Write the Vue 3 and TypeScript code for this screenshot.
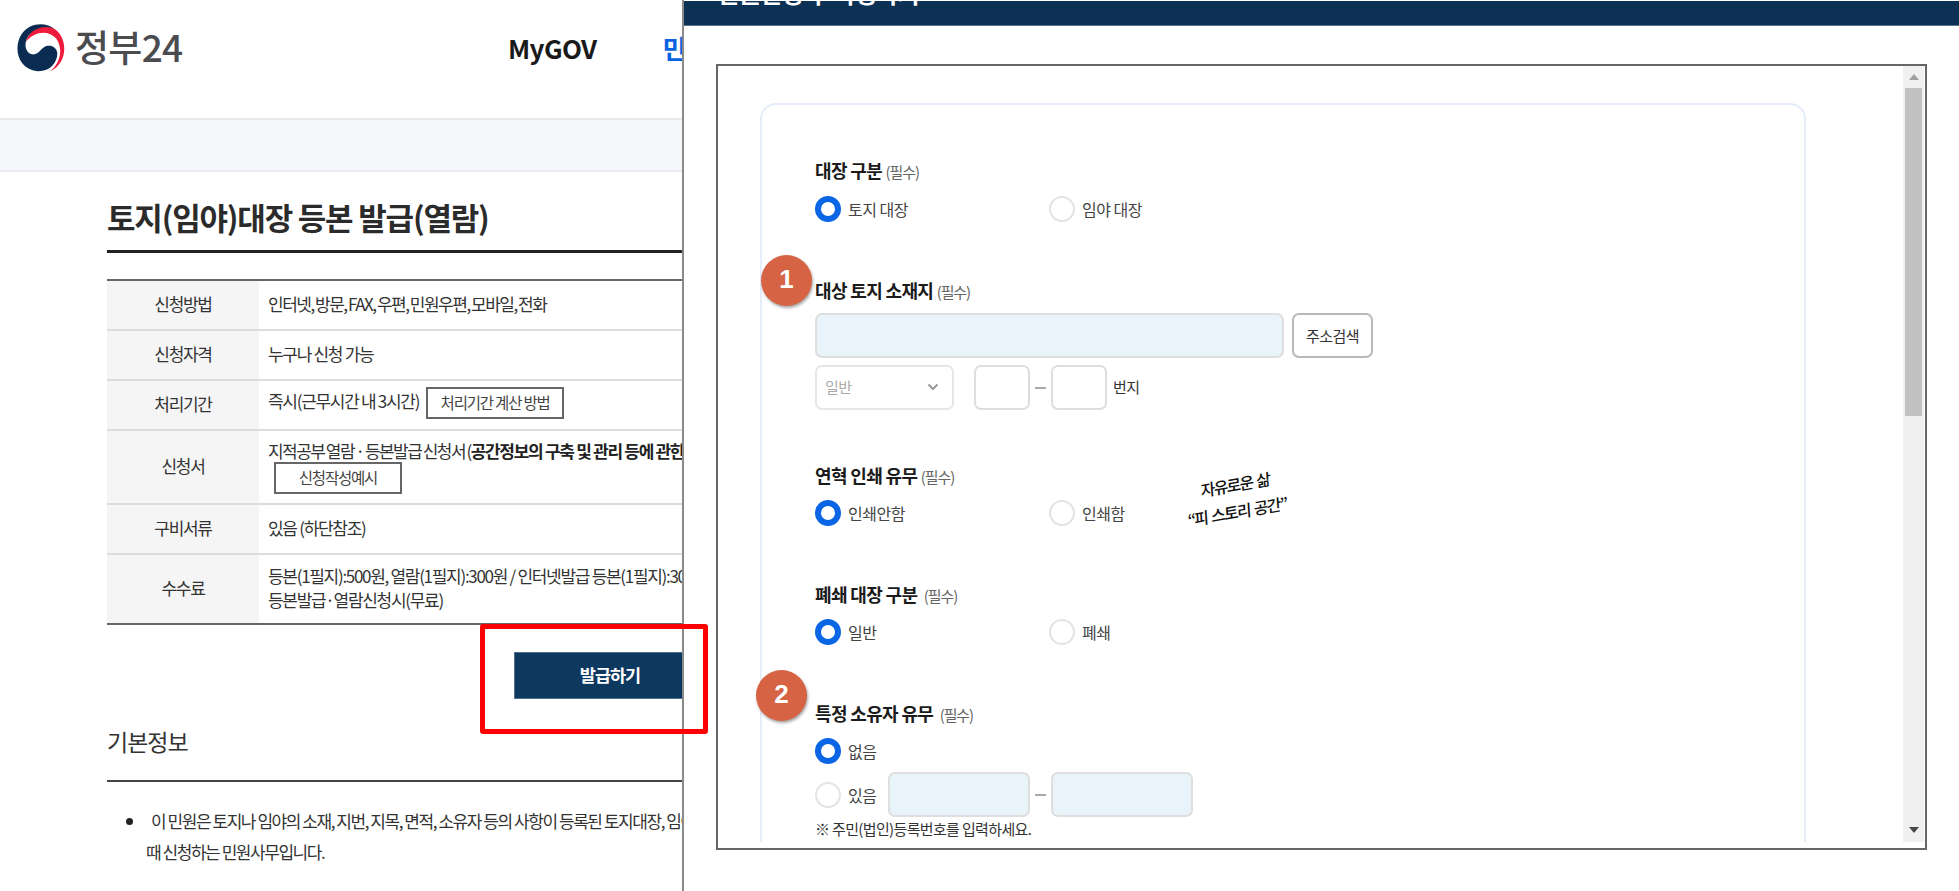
<template>
  <div class="screen">
    <div class="site">
      <header class="site-header">
        <svg class="emblem" viewBox="24 26 144 142">
          <path fill="#0a2c52" d="M137 40C110 18 62 20 38 55C12 95 25 160 85 167C125 168 145 140 145 113C143 92 120 85 105 95C92 103 88 118 70 116C50 112 44 88 55 66C70 40 110 32 137 40Z" />
          <path fill="#ee1c3c" d="M51 78C60 40 108 24 138 41C178 70 176 142 124 167C154 140 164 100 141 68C120 44 78 44 51 78Z" />
        </svg>
        <span class="logo-text">정부24</span>
        <nav class="menu">
          <a class="menu-item">MyGOV</a>
          <a class="menu-item active">민원</a>
        </nav>
      </header>
      <div class="sub-bar"></div>

      <main class="content">
        <h1>토지(임야)대장 등본 발급(열람)</h1>
        <dl class="info-table">
          <div v-for="row in infoRows" :key="row.label" class="info-row" :class="row.kind">
            <dt>{{ row.label }}</dt>
            <dd>
              <div v-for="(line, index) in row.lines" :key="index" class="line">
                {{ line }}<b v-if="row.bold">{{ row.bold }}</b>
              </div>
              <button v-if="row.button" type="button">{{ row.button }}</button>
            </dd>
          </div>
        </dl>
        <button type="button" class="issue-button">발급하기</button>

        <h2>기본정보</h2>
        <ul class="notes">
          <li>
            <p class="first">이 민원은 토지나 임야의 소재, 지번, 지목, 면적, 소유자 등의 사항이 등록된 토지대장, 임야</p>
            <p>때 신청하는 민원사무입니다.</p>
          </li>
        </ul>
      </main>
    </div>

    <div class="popup">
      <div class="popup-title"><span>민원신청 후 작성하기</span></div>
      <div class="frame">
        <div class="viewport">
          <div class="card">
            <section class="field">
              <h3>대장 구분 <small>(필수)</small></h3>
              <div class="radios">
                <label v-for="name in ['토지 대장', '임야 대장']" :key="name" class="radio">
                  <i :class="{ on: ledger === name }" @click="ledger = name"></i>{{ name }}
                </label>
              </div>
            </section>

            <section class="field address">
              <h3>대상 토지 소재지 <small>(필수)</small></h3>
              <div class="address-row">
                <input class="wide filled" type="text">
                <button type="button" class="search">주소검색</button>
              </div>
              <div class="lot-row">
                <div class="select">
                  <span>일반</span>
                  <svg width="12" height="8" viewBox="0 0 12 8"><path d="M1.5 1.5L6 6L10.5 1.5" fill="none" stroke="#999" stroke-width="2" /></svg>
                </div>
                <input class="lot" type="text">
                <span class="dash"></span>
                <input class="lot" type="text">
                <span class="unit">번지</span>
              </div>
            </section>

            <section class="field">
              <h3>연혁 인쇄 유무 <small>(필수)</small></h3>
              <div class="radios">
                <label v-for="name in ['인쇄안함', '인쇄함']" :key="name" class="radio">
                  <i :class="{ on: history === name }" @click="history = name"></i>{{ name }}
                </label>
              </div>
            </section>

            <section class="field">
              <h3>폐쇄 대장 구분 <small class="apart">(필수)</small></h3>
              <div class="radios">
                <label v-for="name in ['일반', '폐쇄']" :key="name" class="radio">
                  <i :class="{ on: closed === name }" @click="closed = name"></i>{{ name }}
                </label>
              </div>
            </section>

            <section class="field">
              <h3>특정 소유자 유무 <small class="apart">(필수)</small></h3>
              <div class="radios">
                <label class="radio"><i :class="{ on: owner === '없음' }" @click="owner = '없음'"></i>없음</label>
              </div>
              <div class="owner-row">
                <label class="radio"><i :class="{ on: owner === '있음' }" @click="owner = '있음'"></i>있음</label>
                <input class="number filled" type="text">
                <span class="dash"></span>
                <input class="number filled" type="text">
              </div>
              <p class="hint">※ 주민(법인)등록번호를 입력하세요.</p>
            </section>
          </div>
          <div class="scrollbar">
            <svg width="10" height="6" viewBox="0 0 10 6"><path d="M0 6L5 0L10 6Z" fill="#a0a0a0" /></svg>
            <div class="thumb"></div>
            <svg class="down" width="10" height="6" viewBox="0 0 10 6"><path d="M0 0L5 6L10 0Z" fill="#484848" /></svg>
          </div>
        </div>
      </div>
    </div>

    <!-- 설명용 표시 -->
    <div class="highlight"></div>
    <div class="step one">1</div>
    <div class="step two">2</div>
    <div class="signature">
      <div>자유로운 삶</div>
      <div class="second">“피 스토리 공간”</div>
    </div>
  </div>
</template>

<script setup lang="ts">
import { ref } from 'vue'

interface InfoRow {
  label: string
  lines: string[]
  bold?: string
  button?: string
  kind?: string
}

const infoRows: InfoRow[] = [
  { label: '신청방법', lines: ['인터넷, 방문, FAX, 우편, 민원우편, 모바일, 전화'], kind: 'method' },
  { label: '신청자격', lines: ['누구나 신청 가능'] },
  { label: '처리기간', lines: ['즉시(근무시간 내 3시간)'], button: '처리기간 계산 방법', kind: 'period' },
  {
    label: '신청서',
    lines: ['지적공부 열람 · 등본발급 신청서 ('],
    bold: '공간정보의 구축 및 관리 등에 관한',
    button: '신청작성예시',
    kind: 'form'
  },
  { label: '구비서류', lines: ['있음 (하단참조)'] },
  {
    label: '수수료',
    lines: ['등본(1필지):500원, 열람(1필지):300원 / 인터넷발급 등본(1필지):300', '등본발급·열람신청시(무료)'],
    kind: 'fee'
  }
]

// 선택된 값
const ledger = ref('토지 대장')
const history = ref('인쇄안함')
const closed = ref('일반')
const owner = ref('없음')
</script>

<style>
body {
  margin: 0;
  background: #fff;
}
</style>

<style scoped>
.screen {
  position: relative;
  display: grid;
  grid-template-columns: 682px 1fr;
  width: 1959px;
  height: 891px;
  overflow: hidden;
  font-family: "Noto Sans CJK KR", "Noto Sans", sans-serif;
  color: #333;
}

*, input, button {
  box-sizing: border-box;
}

h1, h2, h3, p, dl, dd, ul {
  margin: 0;
  padding: 0;
}

button, input {
  font-family: inherit;
  margin: 0;
}

.site {
  height: 891px;
  overflow: hidden;
  white-space: nowrap;
}

.site-header {
  display: flex;
  align-items: center;
  height: 118px;
  padding: 0 0 23px 17px;
}

.emblem {
  width: 48px;
  height: 48px;
  flex: none;
}

.logo-text {
  width: 443px;
  flex: none;
  padding: 0 0 3px 10px;
  font-size: 37px;
  line-height: 40px;
  font-weight: 500;
  letter-spacing: -0.7px;
  color: #4b4c50;
}

.menu {
  display: flex;
  gap: 66px;
}

.menu-item {
  font-size: 26px;
  line-height: 36px;
  font-weight: 600;
  letter-spacing: -0.6px;
  color: #1a1a1a;
}

.menu-item.active {
  color: #0a63e0;
}

.sub-bar {
  height: 54px;
  background: #f5f7fb;
  border-top: 2px solid #e6e8ec;
  border-bottom: 2px solid #e8eaee;
}

.content {
  padding-left: 107px;
}

h1 {
  height: 81px;
  padding-top: 23px;
  border-bottom: 3px solid #222;
  font-size: 31px;
  line-height: 44px;
  font-weight: 600;
  letter-spacing: -1.2px;
  color: #2b2b2b;
}

.info-table {
  margin-top: 26px;
  border-top: 2px solid #666;
  border-bottom: 2px solid #666;
  font-size: 17px;
  line-height: 24px;
  letter-spacing: -1.3px;
}

.info-row {
  display: flex;
  height: 50px;
}

.info-row.method {
  height: 48px;
}

.info-row + .info-row {
  border-top: 2px solid #dcdcdc;
}

dt {
  display: flex;
  align-items: center;
  justify-content: center;
  width: 152px;
  flex: none;
  padding-bottom: 3px;
  background: #f5f5f5;
}

dd {
  display: flex;
  flex-direction: column;
  justify-content: center;
  padding: 0 0 3px 9px;
}

dd button {
  height: 32px;
  padding: 0 0 2px;
  background: #fff;
  border: 2px solid #666;
  font-size: 15.5px;
  line-height: 20px;
  letter-spacing: -1.2px;
  color: #444;
}

.method .line {
  letter-spacing: -1.5px;
  word-spacing: -0.9px;
}

.period dd {
  flex-direction: row;
  justify-content: flex-start;
  align-items: center;
  gap: 7px;
}

.period .line {
  margin-top: -5px;
}

.period button {
  width: 138px;
  margin-top: -1px;
}

.info-row.form {
  height: 74px;
}

.form dd {
  justify-content: flex-start;
  padding-top: 8px;
}

.form .line {
  height: 23px;
  letter-spacing: -1.55px;
  word-spacing: -0.8px;
}

.form button {
  width: 128px;
  margin-left: 6px;
  flex: none;
}

.form b {
  font-weight: 700;
  letter-spacing: -1.3px;
  word-spacing: 0;
  color: #222;
}

.info-row.fee {
  height: 70px;
}

.issue-button {
  display: block;
  width: 192px;
  height: 47px;
  margin: 27px 0 0 407px;
  padding: 0 0 2px;
  border: 1px solid #52708c;
  background: #0d3860;
  font-size: 17.5px;
  font-weight: 700;
  letter-spacing: -1px;
  color: #fff;
}

h2 {
  height: 83px;
  padding-top: 24px;
  border-bottom: 2px solid #444;
  font-size: 23px;
  line-height: 36px;
  font-weight: 400;
  letter-spacing: -1px;
}

.notes {
  padding: 23px 0 0 39px;
  list-style: none;
  font-size: 17px;
  line-height: 31px;
  letter-spacing: -1.45px;
}

.first::before {
  content: "";
  display: inline-block;
  width: 7px;
  height: 7px;
  margin: 0 18px 3px -20px;
  border-radius: 50%;
  background: #222;
}

.popup {
  display: flex;
  flex-direction: column;
  background: #fff;
  border-left: 2px solid #8a8a8a;
  position: relative;
}

.popup-title {
  height: 25px;
  margin-top: 1px;
  overflow: hidden;
  background: #0d3154;
  border-bottom: 1px solid #5b748c;
}

.popup-title span {
  display: block;
  margin: -26px 0 0 33px;
  font-size: 24px;
  line-height: 36px;
  font-weight: 700;
  letter-spacing: -0.7px;
  color: #fff;
}

.frame {
  width: 1211px;
  height: 786px;
  margin: 38px 0 0 32px;
  border: 2px solid #666;
}

.viewport {
  display: flex;
  justify-content: space-between;
  height: 776px;
  padding-right: 1px;
  overflow: hidden;
}

.card {
  width: 1046px;
  height: 820px;
  margin: 37px 0 0 42px;
  padding: 53px 0 0 53px;
  border: 2px solid #e6edfa;
  border-radius: 16px;
}

.field {
  margin-bottom: 56px;
}

.field.address {
  margin-bottom: 53px;
}

h3 {
  height: 24px;
  font-size: 18px;
  line-height: 24px;
  font-weight: 700;
  letter-spacing: -0.65px;
  color: #1b1b1b;
}

small {
  font-size: 15px;
  line-height: 1;
  font-weight: 400;
  letter-spacing: -1.1px;
  color: #666;
}

small.apart {
  margin-left: 3px;
}

.radios {
  display: flex;
  margin-top: 13px;
}

.field:first-child .radios {
  margin-top: 14px;
}

.radio {
  display: flex;
  align-items: center;
  width: 234px;
  height: 26px;
  font-size: 16px;
  line-height: 24px;
  letter-spacing: -0.5px;
  color: #444;
}

.radio i {
  width: 26px;
  height: 26px;
  margin-right: 7px;
  flex: none;
  border: 2px solid #e3e3e3;
  border-radius: 50%;
  background: #fff;
}

.radio i.on {
  border: 6px solid #0a66e4;
}

input, .select, .search {
  height: 45px;
  border: 2px solid #dedede;
  border-radius: 7px;
  background: #fff;
}

input.filled {
  background: #e8f4fa;
}

.address-row {
  display: flex;
  gap: 8px;
  margin-top: 11px;
}

.wide {
  width: 469px;
}

.search {
  width: 81px;
  padding: 0 0 1px;
  border-color: #b9b9bd;
  font-size: 15px;
  letter-spacing: -0.6px;
  color: #333;
}

.lot-row {
  display: flex;
  align-items: center;
  margin-top: 7px;
}

.select {
  display: flex;
  align-items: center;
  justify-content: space-between;
  width: 139px;
  padding: 0 13px 2px 8px;
  margin-right: 20px;
  border-color: #e6e6e6;
  font-size: 15px;
  letter-spacing: -0.6px;
  color: #aaa;
}

.lot {
  width: 56px;
}

.dash {
  width: 11px;
  height: 2px;
  margin: 0 5px;
  background: #aaa;
}

.unit {
  margin-left: 6px;
  padding-bottom: 2px;
  font-size: 15px;
  letter-spacing: -0.6px;
}

.owner-row {
  display: flex;
  align-items: center;
  margin-top: 8px;
}

.owner-row .radio {
  width: 73px;
}

.number {
  width: 142px;
}

.hint {
  margin-top: 1px;
  font-size: 15px;
  line-height: 22px;
  letter-spacing: -0.65px;
}

.scrollbar {
  display: flex;
  flex-direction: column;
  align-items: center;
  width: 21px;
  height: 776px;
  padding: 8px 0 9px;
  background: #f0f0f0;
}

.thumb {
  width: 17px;
  height: 328px;
  margin-top: 8px;
  background: #c1c1c1;
}

.down {
  margin-top: auto;
}

.highlight {
  position: absolute;
  left: 480px;
  top: 624px;
  width: 228px;
  height: 110px;
  border: 5px solid #f00;
  border-radius: 3px;
}

.step {
  position: absolute;
  width: 51px;
  height: 51px;
  border-radius: 50%;
  background: #d66344;
  box-shadow: 1px 2px 3px rgba(0, 0, 0, 0.35);
  font-family: "Liberation Sans", sans-serif;
  font-size: 26px;
  line-height: 49px;
  font-weight: 700;
  text-align: center;
  color: #fff;
}

.one {
  left: 761px;
  top: 255px;
}

.two {
  left: 756px;
  top: 670px;
}

.signature {
  position: absolute;
  left: 1186px;
  top: 471px;
  width: 100px;
  transform: rotate(-10deg) skewX(-6deg);
  font-size: 16px;
  line-height: 27px;
  font-weight: 500;
  letter-spacing: -1.6px;
  word-spacing: 2px;
  text-align: center;
  white-space: nowrap;
  color: #111;
}
</style>
